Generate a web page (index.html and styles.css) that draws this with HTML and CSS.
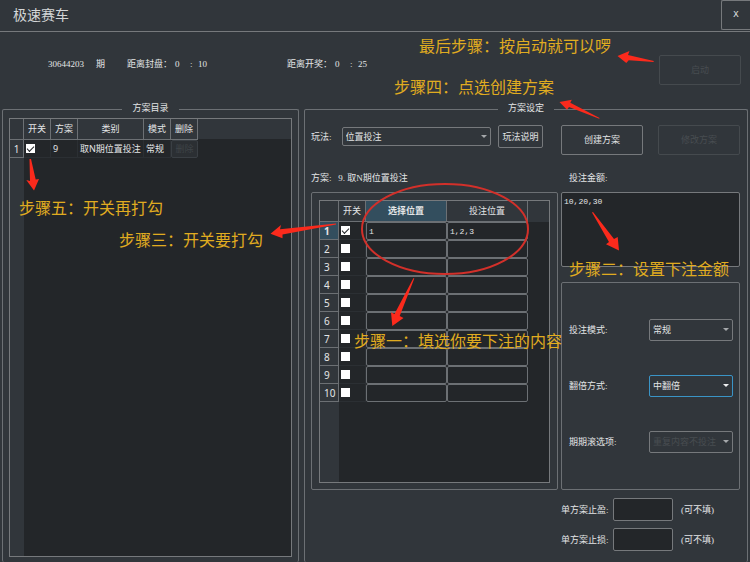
FILE: index.html
```html
<!DOCTYPE html>
<html lang="zh-CN">
<head>
    <meta charset="UTF-8">
    <meta name="viewport" content="width=device-width, initial-scale=1.0">
    <title>极速赛车</title>
    <link rel="stylesheet" href="styles.css">
</head>
<body>
    <div class="window">
        <header class="titlebar">
            <h1>极速赛车</h1>
            <button type="button" class="close">X</button>
        </header>

        <div class="status">
            <span class="issue">30644203</span>
            <span class="issue-unit">期</span>
            <span class="timer-label">距离封盘：</span>
            <span class="minutes">0</span>
            <span class="colon">:</span>
            <span class="seconds">10</span>
            <span class="timer-label">距离开奖：</span>
            <span class="minutes">0</span>
            <span class="colon">:</span>
            <span class="seconds">25</span>
            <button type="button" class="btn start" disabled>启动</button>
        </div>

        <main class="panels">
            <!-- 方案目录 -->
            <fieldset class="group">
                <legend>方案目录</legend>
                <div class="view view-plans">
                    <table class="plans">
                        <thead>
                            <tr>
                                <td class="col-num"></td>
                                <th class="col-switch">开关</th>
                                <th class="col-small">方案</th>
                                <th class="col-type">类别</th>
                                <th class="col-small">模式</th>
                                <th class="col-small">删除</th>
                            </tr>
                        </thead>
                        <tbody>
                            <tr>
                                <th>1</th>
                                <td><input type="checkbox" aria-label="开关" checked></td>
                                <td>9</td>
                                <td>取N期位置投注</td>
                                <td>常规</td>
                                <td class="cell-btn"><button type="button" class="btn" disabled>删除</button></td>
                            </tr>
                        </tbody>
                    </table>
                </div>
            </fieldset>

            <!-- 方案设定 -->
            <fieldset class="group">
                <legend>方案设定</legend>
                <div class="setup">
                    <div class="play">
                        <label for="play">玩法:</label>
                        <span class="select">
                            <select id="play"><option>位置投注</option></select>
                        </span>
                        <button type="button" class="btn">玩法说明</button>
                    </div>
                    <div class="actions">
                        <button type="button" class="btn">创建方案</button>
                        <button type="button" class="btn" disabled>修改方案</button>
                    </div>

                    <p class="caption">方案: &nbsp; 9. 取N期位置投注</p>
                    <label class="caption caption-amount" for="amount">投注金额:</label>

                    <div class="frame">
                        <div class="view view-bets">
                            <table class="bets">
                                <thead>
                                    <tr>
                                        <td class="col-num"></td>
                                        <th class="col-switch">开关</th>
                                        <th class="col-pos current">选择位置</th>
                                        <th class="col-pos">投注位置</th>
                                    </tr>
                                </thead>
                                <tbody id="bet-rows"></tbody>
                            </table>
                        </div>
                    </div>
                    <div class="side">
                        <textarea id="amount">10,20,30</textarea>
                        <div class="frame options">
                            <div class="option">
                                <label for="mode">投注模式:</label>
                                <span class="select"><select id="mode"><option>常规</option></select></span>
                            </div>
                            <div class="option">
                                <label for="double">翻倍方式:</label>
                                <span class="select active"><select id="double"><option>中翻倍</option></select></span>
                            </div>
                            <div class="option">
                                <label for="roll">期期滚选项:</label>
                                <span class="select"><select id="roll" disabled><option>重复内容不投注</option></select></span>
                            </div>
                        </div>
                    </div>

                    <div class="limits">
                        <div class="limit">
                            <label for="profit">单方案止盈:</label>
                            <input type="text" id="profit">
                            <span>(可不填)</span>
                        </div>
                        <div class="limit">
                            <label for="loss">单方案止损:</label>
                            <input type="text" id="loss">
                            <span>(可不填)</span>
                        </div>
                    </div>
                </div>
            </fieldset>
        </main>

        <!-- 操作步骤标注 -->
        <svg class="marks" width="750" height="562" viewBox="0 0 750 562" aria-hidden="true">
            <ellipse cx="445" cy="229" rx="83" ry="45"/>
            <path d="M29.5 159 L31 159 L35.7 179.5 L39 179 L34 190.5 L26.3 180 L30 181 Z"/>
            <path d="M336 223.5 L336 224.5 L282.5 234.5 L282.5 238.3 L270.5 233.7 L281 225 L280 229.3 Z"/>
            <path d="M413.5 278 L414.3 278.4 L399.7 316 L403.5 318 L392.3 326 L391 312.3 L394.5 314 Z"/>
            <path d="M592 212.6 L593 212 L614 239 L617.7 237 L619 250.5 L606 244.3 L609 242 Z"/>
            <path d="M653.8 61 L653.5 62 L628.7 60.3 L626.3 62.9 L617.5 56 L629.5 51 L628 55 Z"/>
            <path d="M599.6 118 L599.2 118.8 L569 107 L567 109.8 L559.5 102 L571.8 99.8 L570.3 102.7 Z"/>
        </svg>
        <p class="step step-last">最后步骤：按启动就可以啰</p>
        <p class="step step-4">步骤四：点选创建方案</p>
        <p class="step step-5">步骤五：开关再打勾</p>
        <p class="step step-3">步骤三：开关要打勾</p>
        <p class="step step-1">步骤一：填选你要下注的内容</p>
        <p class="step step-2">步骤二：设置下注金额</p>
    </div>
    <script>
        // 投注表格共10行, 只有第一行有内容
        const bets = [{ pick: '1', bet: '1,2,3' }];
        const rows = document.getElementById('bet-rows');

        for (let i = 0; i < 10; i++) {
            const item = bets[i];
            const tr = document.createElement('tr');
            tr.innerHTML = `
                <th class="${item ? 'current' : ''}">${i + 1}</th>
                <td><input type="checkbox" aria-label="开关" ${item ? 'checked' : ''}></td>
                <td class="cell-input"><input type="text" aria-label="选择位置" value="${item ? item.pick : ''}"></td>
                <td class="cell-input"><input type="text" aria-label="投注位置" value="${item ? item.bet : ''}"></td>`;
            rows.appendChild(tr);
        }
    </script>
</body>
</html>
```
FILE: styles.css
```css
* {
    box-sizing: border-box;
}

body {
    margin: 0;
    background-color: #31363b;
    color: #e3e5e6;
    font-family: "Liberation Serif", "Noto Sans CJK SC", serif;
    font-size: 9px;
    line-height: 12px;
}

h1, p {
    margin: 0;
    font-weight: normal;
}

button, input, select, textarea {
    font: inherit;
    color: inherit;
    margin: 0;
    padding: 0;
}

.window {
    position: relative;
    display: flex;
    flex-direction: column;
    min-height: 100vh;
    overflow: hidden;
}

/* 标题栏 */
.titlebar {
    display: flex;
    justify-content: space-between;
    align-items: center;
    height: 32px;
    padding-left: 13px;
    padding-bottom: 2px;
    border-bottom: 1px solid #76797c;
}

.titlebar h1 {
    font-family: "Noto Sans CJK SC", sans-serif;
    font-size: 14px;
    line-height: 20px;
    padding-bottom: 2px;
    color: #d4d6d7;
}

.close {
    width: 29px;
    height: 30px;
    background: none;
    border: 1px solid #76797c;
    border-right: 0;
    border-radius: 2px 0 0 2px;
    font-family: "Liberation Mono", monospace;
}

/* 期号和倒计时 */
.status {
    display: flex;
    align-items: flex-start;
    height: 70px;
    padding: 23px 9px 0 48px;
    line-height: 18px;
}

.issue {
    width: 48px;
}

.issue-unit {
    width: 31px;
}

.timer-label {
    width: 48px;
}

.minutes {
    width: 15px;
}

.colon {
    width: 8px;
}

.seconds {
    width: 89px;
}

.btn {
    background: none;
    border: 1px solid #76797c;
    border-radius: 2px;
    line-height: 12px;
    white-space: nowrap;
}

.btn:disabled {
    color: #484d51;
    border-color: #454a4e;
}

.start {
    width: 82px;
    height: 30px;
    margin-left: auto;
}

/* 分组框 */
.panels {
    flex: 1;
    display: grid;
    grid-template-columns: 297fr 444fr;
    gap: 5px;
    padding: 0 2px;
}

.group {
    display: flex;
    flex-direction: column;
    min-width: 0;
    margin: 0;
    padding: 1px 6px 5px;
    border: 1px solid #6c7074;
    border-bottom: 0;
    border-radius: 2px;
}

.group legend {
    margin: 0 auto;
    padding: 0 10px 3px;
}

.frame {
    display: flex;
    padding: 7px 7px 6px;
    border: 1px solid #6c7074;
    border-radius: 2px;
}

/* 表格 */
.view {
    flex: 1;
    border: 1px solid #76797c;
    background-color: #232629;
    background-image: linear-gradient(#31363b, #31363b), linear-gradient(#31363b, #31363b);
    background-repeat: no-repeat;
    font-family: "Noto Sans", "Noto Sans CJK SC", sans-serif;
}

.view-plans {
    background-size: 100% 20px, 14px 100%;
}

.view-bets {
    background-size: 100% 21px, 19px 100%;
}

table {
    table-layout: fixed;
    border-spacing: 0;
}

.plans {
    width: 188px;
}

.bets {
    width: 208px;
}

th, td {
    height: 18px;
    padding: 0;
    white-space: nowrap;
}

th {
    background-color: #31363b;
    border-right: 1px solid #6c7074;
    border-bottom: 1px solid #6c7074;
    font-weight: normal;
}

thead th, thead td {
    height: 21px;
}

thead td {
    border-right: 1px solid #6c7074;
    border-bottom: 1px solid #6c7074;
}

tbody th {
    font-size: 10px;
}

tbody td {
    padding-left: 2px;
    border-right: 1px solid #2b2f33;
    border-bottom: 1px solid #2b2f33;
}

th.current {
    background-color: #334e5e;
    font-weight: bold;
}

.plans .col-num {
    width: 14px;
}

.bets .col-num {
    width: 19px;
}

.bets tbody th {
    text-align: left;
    padding-left: 4px;
}

.col-switch {
    width: 27px;
}

.col-small {
    width: 27px;
}

.col-type {
    width: 66px;
}

.col-pos {
    width: 81px;
}

.cell-btn, .cell-input {
    padding: 0;
    border: 0;
}

.cell-btn .btn {
    display: block;
    width: 27px;
    height: 18px;
    background-color: #2b2f33;
    border-color: #3a3f44;
    color: #3f4448;
}

.cell-input input {
    display: block;
    width: 100%;
    height: 18px;
    padding: 0 2px;
    background: none;
    border: 1px solid #6c7074;
    border-radius: 2px;
    font-family: "Liberation Mono", "Noto Sans CJK SC", monospace;
    font-size: 8px;
}

input[type="checkbox"] {
    appearance: none;
    display: block;
    width: 9px;
    height: 9px;
    background-color: #fff;
}

/* 对勾 */
input[type="checkbox"]:checked::before {
    content: "";
    display: block;
    width: 6px;
    height: 3px;
    margin: 0 auto;
    border-left: 1px solid #232629;
    border-bottom: 1px solid #232629;
    transform: translateY(2px) rotate(-45deg);
}

/* 方案设定 */
.setup {
    display: grid;
    grid-template-columns: 247fr 179fr;
    grid-template-rows: 30px 37px auto auto;
    column-gap: 3px;
    padding: 7px 1px 0 0;
}

.play {
    display: flex;
    align-items: center;
    height: 23px;
    padding-right: 15px;
}

.play .select {
    flex: 1;
    height: 19px;
    margin: 0 7px 0 10px;
}

.play .btn {
    width: 45px;
    height: 23px;
}

.actions {
    display: flex;
    gap: 15px;
}

.actions .btn {
    flex: 1;
}

.caption {
    padding-top: 17px;
}

.caption-amount {
    padding-left: 8px;
}

.select {
    position: relative;
    display: flex;
    width: 84px;
    height: 22px;
}

.select select {
    appearance: none;
    width: 100%;
    padding: 0 12px 0 3px;
    background: none;
    border: 1px solid #76797c;
    border-radius: 2px;
    overflow: hidden;
}

.select select:disabled {
    color: #484d51;
    opacity: 1;
}

.select::after {
    content: "";
    position: absolute;
    right: 4px;
    top: calc(50% - 2px);
    border: 3px solid transparent;
    border-top-color: #a5a8ab;
    border-bottom: 0;
    pointer-events: none;
}

.select.active select {
    border-color: #3a94c6;
}

.select.active::after {
    border-top-color: #eff0f1;
}

.side {
    display: flex;
    flex-direction: column;
    gap: 15px;
}

.side textarea {
    height: 75px;
    padding: 3px 2px;
    background-color: #232629;
    border: 1px solid #76797c;
    border-radius: 2px;
    font-family: "Liberation Mono", "Noto Sans CJK SC", monospace;
    font-size: 8px;
    resize: none;
}

.options {
    flex-direction: column;
    gap: 34px;
    padding: 36px 6px 36px 7px;
}

.option {
    display: flex;
    justify-content: space-between;
    align-items: center;
}

.limits {
    grid-column: 2;
    display: flex;
    flex-direction: column;
    gap: 7px;
    padding-top: 8px;
}

.limit {
    display: flex;
    align-items: center;
}

.limit label {
    width: 52px;
}

.limit input {
    width: 60px;
    height: 23px;
    margin-right: 8px;
    background-color: #232629;
    border: 1px solid #76797c;
    border-radius: 2px;
}

/* 标注 */
.marks {
    position: absolute;
    left: 0;
    top: 0;
    pointer-events: none;
}

.marks path {
    fill: #fb2a1c;
}

.marks ellipse {
    fill: none;
    stroke: #d2302a;
    stroke-width: 2;
}

.step {
    position: absolute;
    font-family: "Noto Sans CJK SC", sans-serif;
    font-size: 16px;
    line-height: 20px;
    color: #e0ac20;
    white-space: nowrap;
    pointer-events: none;
}

.step-last {
    left: 419px;
    top: 35px;
}

.step-4 {
    left: 394px;
    top: 76px;
}

.step-5 {
    left: 19px;
    top: 197px;
}

.step-3 {
    left: 119px;
    top: 229px;
}

.step-1 {
    left: 354px;
    top: 330px;
}

.step-2 {
    left: 569px;
    top: 258px;
}
```
